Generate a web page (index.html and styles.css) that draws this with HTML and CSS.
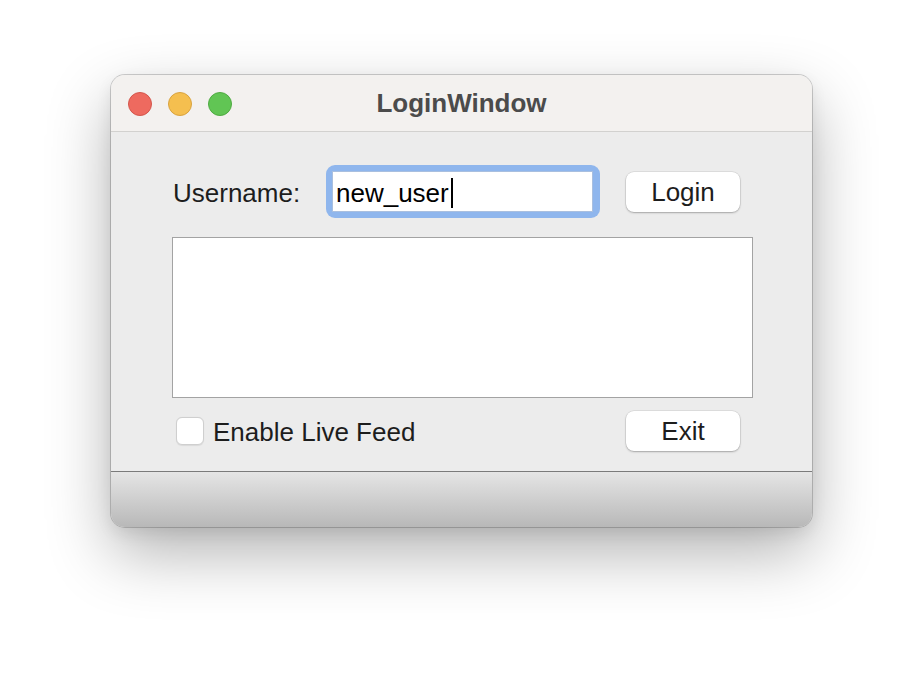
FILE: index.html
```html
<!DOCTYPE html>
<html>
<head>
<meta charset="utf-8">
<link rel="stylesheet" href="styles.css">
</head>
<body>
<div class="window">
  <div class="titlebar">
    <div class="lights">
      <span class="light red"></span>
      <span class="light yellow"></span>
      <span class="light green"></span>
    </div>
    <div class="title">LoginWindow</div>
    <div class="spacer"></div>
  </div>
  <div class="content">
    <div class="row top-row">
      <div class="label">Username:</div>
      <div class="ring">
        <div class="field"><span class="value">new_user</span><span class="caret"></span></div>
      </div>
      <div class="button">Login</div>
    </div>
    <div class="textarea"></div>
    <div class="row bottom-row">
      <div class="check">
        <span class="box"></span>
        <span class="check-label">Enable Live Feed</span>
      </div>
      <div class="button">Exit</div>
    </div>
  </div>
  <div class="footer"></div>
</div>
</body>
</html>
```
FILE: styles.css
```css
html, body {
  margin: 0;
  padding: 0;
  background: #ffffff;
  width: 924px;
  height: 674px;
  overflow: hidden;
}
body {
  font-family: "Liberation Sans", Arial, sans-serif;
  padding-top: 75px;
  box-sizing: border-box;
}
.window {
  width: 701px;
  height: 452px;
  margin-left: 111px;
  border-radius: 14px;
  overflow: hidden;
  background: #ececec;
  box-shadow: 0 0 0 1px rgba(0,0,0,0.18), 0 26px 64px rgba(0,0,0,0.3), 0 6px 16px rgba(0,0,0,0.08);
  display: flex;
  flex-direction: column;
}
.titlebar {
  height: 56px;
  background: #f3f1ef;
  border-bottom: 1px solid #d2d1cf;
  display: grid;
  grid-template-columns: 1fr auto 1fr;
  align-items: center;
}
.lights {
  display: flex;
  gap: 16px;
  padding-left: 17px;
  padding-top: 2px;
}
.light {
  width: 24px;
  height: 24px;
  border-radius: 50%;
  box-sizing: border-box;
}
.red { background: #ee6a5f; border: 1px solid #d4564c; }
.yellow { background: #f5bf4f; border: 1px solid #d9a33f; }
.green { background: #61c554; border: 1px solid #4fab42; }
.title {
  font-weight: bold;
  font-size: 26px;
  color: #4b4b4b;
  padding-top: 1px;
}
.content {
  height: 339px;
  box-sizing: border-box;
  padding: 33px 0 0 61px;
  display: flex;
  flex-direction: column;
}
.row {
  display: flex;
  align-items: center;
}
.top-row {
  height: 53px;
}
.label {
  width: 154px;
  padding-left: 1px;
  box-sizing: border-box;
  font-size: 26px;
  color: #1d1d1d;
  padding-top: 4px;
}
.ring {
  width: 274px;
  height: 53px;
  box-sizing: border-box;
  border-radius: 9px;
  background: #8fb6ed;
  padding: 6px 7px 6px 6px;
}
.field {
  height: 41px;
  background: #ffffff;
  box-sizing: border-box;
  border: 1px solid #a9bfdf;
  display: flex;
  align-items: center;
  padding-left: 3px;
}
.value {
  font-size: 26px;
  color: #000000;
  padding-top: 4px;
}
.caret {
  width: 2px;
  height: 30px;
  background: #000000;
  margin-left: 2px;
  margin-top: 2px;
}
.button {
  width: 114px;
  height: 40px;
  box-sizing: border-box;
  background: #ffffff;
  border-radius: 8px;
  box-shadow: 0 0 0 0.5px rgba(0,0,0,0.12), 0 1px 2px rgba(0,0,0,0.25);
  font-size: 26px;
  color: #1d1d1d;
  display: flex;
  align-items: center;
  justify-content: center;
  padding-top: 1px;
}
.top-row .button {
  margin-left: 26px;
}
.textarea {
  margin-top: 19px;
  width: 581px;
  height: 161px;
  box-sizing: border-box;
  background: #ffffff;
  border: 1px solid #a3a3a3;
}
.bottom-row {
  margin-top: 13px;
  height: 40px;
  width: 568px;
  justify-content: space-between;
}
.check {
  display: flex;
  align-items: center;
  padding-left: 4px;
}
.box {
  width: 28px;
  height: 28px;
  box-sizing: border-box;
  border-radius: 6px;
  background: #ffffff;
  border: 1px solid #cfcfcf;
  box-shadow: 0 0.5px 1px rgba(0,0,0,0.08);
}
.check-label {
  margin-left: 9px;
  font-size: 26px;
  color: #1d1d1d;
  padding-top: 3px;
}
.footer {
  flex: 1;
  border-top: 1px solid #7b7b7b;
  background: linear-gradient(#e5e5e5, #b8b8b8);
}
```
